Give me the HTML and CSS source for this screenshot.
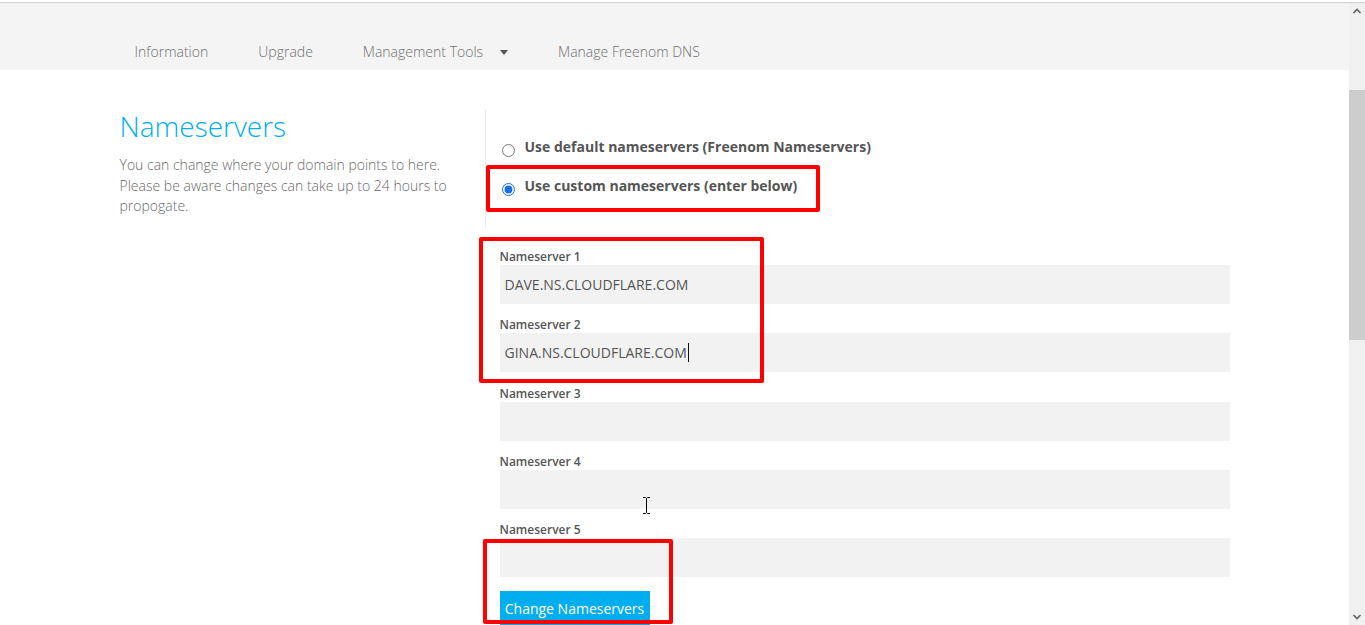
FILE: index.html
```html
<!DOCTYPE html>
<html lang="en">
<head>
<meta charset="utf-8">
<title>Nameservers</title>
<link rel="stylesheet" href="styles.css">
</head>
<body>
<div class="topline"></div>
<div class="page">
  <header class="subnav">
    <div class="container">
      <ul class="nav">
        <li class="nav-item">Information</li>
        <li class="nav-item">Upgrade</li>
        <li class="nav-item dropdown">Management Tools <span class="caret-down"></span></li>
        <li class="nav-item">Manage Freenom DNS</li>
      </ul>
    </div>
  </header>

  <main class="container content">
    <section class="intro">
      <h1 class="title">Nameservers</h1>
      <p class="lead">You can change where your domain points to here. Please be aware changes can take up to 24 hours to propogate.</p>
    </section>

    <section class="settings">
      <div class="choices">
        <label class="choice">
          <input type="radio" name="ns" class="radio">
          <span>Use default nameservers (Freenom Nameservers)</span>
        </label>
        <label class="choice">
          <input type="radio" name="ns" class="radio" checked>
          <span>Use custom nameservers (enter below)</span>
        </label>
      </div>

      <div class="fields">
        <div class="field">
          <div class="field-label">Nameserver 1</div>
          <div class="field-input"><span>DAVE.NS.CLOUDFLARE.COM</span></div>
        </div>
        <div class="field">
          <div class="field-label">Nameserver 2</div>
          <div class="field-input"><span class="typing">GINA.NS.CLOUDFLARE.COM</span></div>
        </div>
        <div class="field">
          <div class="field-label">Nameserver 3</div>
          <div class="field-input"></div>
        </div>
        <div class="field">
          <div class="field-label">Nameserver 4</div>
          <div class="field-input"></div>
        </div>
        <div class="field">
          <div class="field-label">Nameserver 5</div>
          <div class="field-input"></div>
        </div>
        <button class="btn-submit" type="button">Change Nameservers</button>
      </div>
    </section>
  </main>

  <div class="mark mark-radio"></div>
  <div class="mark mark-fields"></div>
  <div class="mark mark-button"></div>

  <svg class="ibeam" width="9" height="17" viewBox="0 0 9 17">
    <path d="M1 0.5h2.5l1 1 1-1H8M4.5 1.5v14M1 16.5h2.5l1-1 1 1H8" fill="none" stroke="#000" stroke-width="1"/>
  </svg>
</div>

<div class="scrollbar">
  <svg class="arrow arrow-up" width="16" height="16" viewBox="0 0 16 16"><path d="M4.5 10l3.5-3.5 3.5 3.5" fill="none" stroke="#606060" stroke-width="1.6"/></svg>
  <div class="thumb"></div>
  <svg class="arrow arrow-down" width="16" height="16" viewBox="0 0 16 16"><path d="M4.5 6l3.5 3.5 3.5-3.5" fill="none" stroke="#606060" stroke-width="1.6"/></svg>
</div>
</body>
</html>
```

FILE: styles.css
```css
* { box-sizing: border-box; }

html, body {
  margin: 0;
  padding: 0;
  background: #fff;
  overflow: hidden;
  height: 625px;
}

body {
  font-family: "Open Sans", "Liberation Sans", sans-serif;
  color: #555;
}

.topline {
  height: 3px;
  border-bottom: 1px solid #cfcfcf;
}

.page {
  position: relative;
  width: 1349px;
}

.container {
  width: 1140px;
  margin: 0 auto;
  padding: 0 15px;
}

/* header nav */
.subnav {
  background: #f4f4f4;
  height: 67px;
  padding-top: 39px;
}

.nav {
  list-style: none;
  margin: 0;
  padding: 0 0 0 15px;
  display: flex;
  gap: 50px;
  font-size: 14px;
  font-weight: 300;
  line-height: 20px;
  color: #6f6f6f;
}

.nav-item { white-space: nowrap; }

.dropdown { display: flex; align-items: center; }

.caret-down {
  display: inline-block;
  margin-left: 17px;
  width: 0;
  height: 0;
  border-left: 4.5px solid transparent;
  border-right: 4.5px solid transparent;
  border-top: 5px solid #555;
}

/* content */
.content {
  display: flex;
  padding: 0;
  margin-top: 40px;
}

.intro {
  width: 380px;
  padding: 0 15px;
}

.title {
  margin: 0;
  font-size: 28px;
  line-height: 32px;
  font-weight: 300;
  color: #00aeef;
}

.lead {
  margin: 13px 0 0;
  font-size: 14px;
  font-weight: 300;
  line-height: 20.5px;
  color: #6a6a6a;
}

.settings {
  width: 760px;
}

.choices {
  border-left: 1px solid #ececec;
  padding: 27px 15px 32px 15px;
  display: flex;
  flex-direction: column;
  gap: 19px;
}

.choice {
  display: flex;
  align-items: flex-start;
  font-size: 14px;
  font-weight: 700;
  line-height: 20px;
  color: #555;
}

.radio {
  margin: 7px 10px 0 1px;
  width: 13px;
  height: 13px;
  accent-color: #1a6fe6;
}

.fields {
  padding: 19px 15px 0 15px;
  display: flex;
  flex-direction: column;
  gap: 11.25px;
}

.field-label {
  font-size: 12px;
  font-weight: 600;
  line-height: 20px;
  height: 18px;
  color: #555;
}

.field-input {
  height: 39px;
  background: #f2f2f2;
  padding: 0 5px;
  display: flex;
  align-items: center;
  font-size: 14px;
  color: #555;
}

.typing {
  border-right: 1px solid #111;
  padding-right: 1px;
  line-height: 19px;
}

.btn-submit {
  align-self: flex-start;
  margin-top: 3px;
  height: 34px;
  width: 150px;
  border: none;
  background: #00aeef;
  color: #fff;
  font-family: inherit;
  font-size: 14px;
  padding: 0;
}

/* red annotation boxes */
.mark {
  position: absolute;
  border: 4px solid #ff0000;
  border-radius: 2px;
}
.mark-radio { left: 486px; top: 162px; width: 334px; height: 47px; }
.mark-fields { left: 479px; top: 234px; width: 285px; height: 146px; }
.mark-button { left: 483px; top: 536px; width: 190px; height: 85px; }

.ibeam {
  position: absolute;
  left: 642px;
  top: 494px;
}

/* fake scrollbar */
.scrollbar {
  position: fixed;
  right: 0;
  top: 3px;
  bottom: 0;
  width: 16px;
  background: #f0f0f0;
  display: flex;
  flex-direction: column;
}

.arrow { display: block; flex: none; }

.thumb {
  margin-top: 71px;
  height: 250px;
  background: #cdcdcd;
}

.arrow-down {
  margin-top: auto;
}
```
